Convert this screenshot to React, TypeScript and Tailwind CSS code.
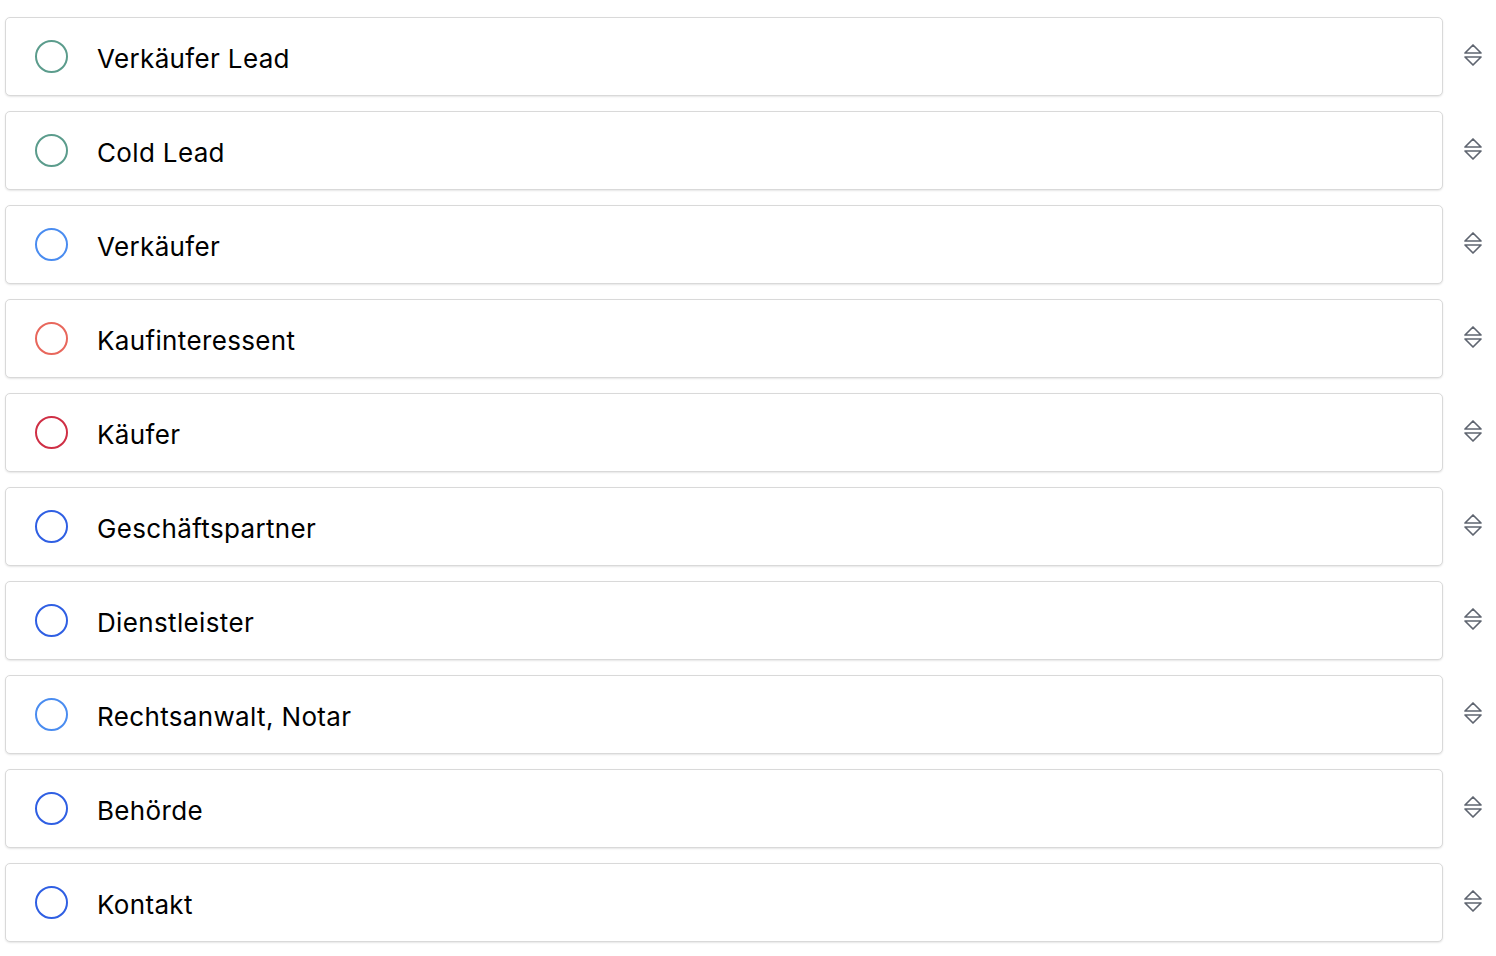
const items = [
  { label: "Verkäufer Lead", color: "border-[#5b9c8c]" },
  { label: "Cold Lead", color: "border-[#5b9c8c]" },
  { label: "Verkäufer", color: "border-[#4a8cf0]" },
  { label: "Kaufinteressent", color: "border-[#e8675c]" },
  { label: "Käufer", color: "border-[#cf2f45]" },
  { label: "Geschäftspartner", color: "border-[#2f5fe3]" },
  { label: "Dienstleister", color: "border-[#2f5fe3]" },
  { label: "Rechtsanwalt, Notar", color: "border-[#4a8cf0]" },
  { label: "Behörde", color: "border-[#2f5fe3]" },
  { label: "Kontakt", color: "border-[#2f5fe3]" },
];

function SortIcon() {
  return (
    <svg width="22" height="28" viewBox="0 0 22 28" fill="none" stroke="#5f6570" strokeWidth="1.7" strokeLinejoin="round" strokeLinecap="round">
      <path d="M3 12 L11 4 L19 12 Z" />
      <path d="M3 16 L11 24 L19 16 Z" />
    </svg>
  );
}

export default function App() {
  return (
    <div className="w-[1496px] min-h-[956px] bg-white pt-[17px] pl-[5px] flex flex-col gap-[15px]" style={{ fontFamily: "Inter, 'Noto Sans', sans-serif" }}>
      {items.map((item) => (
        <div key={item.label} className="flex items-center">
          {/* Card */}
          <div className="w-[1438px] h-[79px] bg-white border border-[#d9d9d9] rounded-[5px] shadow-[0_1px_2px_rgba(0,0,0,0.1)] flex items-center pl-[29px]">
            <span className={`w-[33px] h-[33px] rounded-full border-2 ${item.color} shrink-0`} />
            <span className="ml-[29px] text-[26px] text-black tracking-[0.35px] -mb-[3px]">{item.label}</span>
          </div>
          {/* Drag handle */}
          <div className="flex-1 flex justify-center pl-[7px] -mt-[4px]">
            <SortIcon />
          </div>
        </div>
      ))}
    </div>
  );
}
